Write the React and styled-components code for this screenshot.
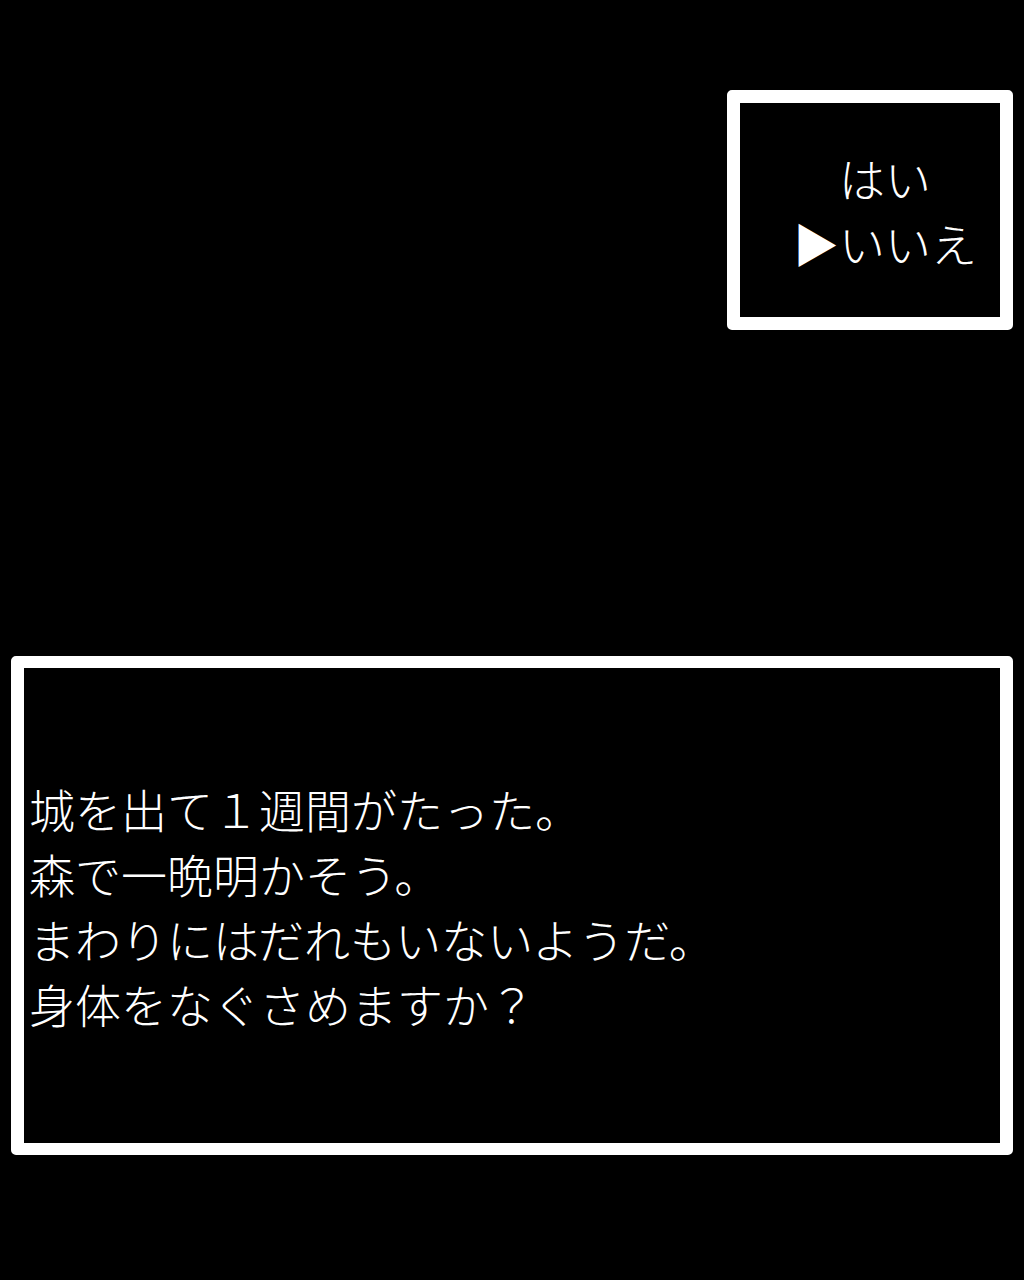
import styled, { createGlobalStyle } from 'styled-components';

const GlobalStyle = createGlobalStyle`
  html, body {
    margin: 0;
    padding: 0;
    background: #000;
  }
`;

const Screen = styled.div`
  width: 1024px;
  height: 1280px;
  box-sizing: border-box;
  padding: 90px 11px 0 11px;
  display: flex;
  flex-direction: column;
  background: #000;
  color: #fff;
  font-family: 'Noto Sans CJK JP', 'Noto Sans', sans-serif;
  font-size: 46px;
  font-weight: 300;
  line-height: 65px;
`;

const Window = styled.div`
  box-sizing: border-box;
  border: 13px solid #fff;
  border-radius: 5px;
  background: #000;
  display: flex;
  align-items: center;
`;

const ChoiceWindow = styled(Window)`
  align-self: flex-end;
  width: 286px;
  height: 240px;
  padding-left: 53px;
`;

const MessageWindow = styled(Window)`
  margin-top: 326px;
  height: 499px;
  border-width: 12px 13px 12px 13px;
  padding-left: 5px;
`;

const Lines = styled.div`
  display: flex;
  flex-direction: column;
`;

const Line = styled.div`
  white-space: pre;
`;

const Cursor = styled.span`
  display: inline-block;
  width: 46px;
`;

const choices = [
  { label: 'はい', selected: false },
  { label: 'いいえ', selected: true },
];

const message = [
  '城を出て１週間がたった。',
  '森で一晩明かそう。',
  'まわりにはだれもいないようだ。',
  '身体をなぐさめますか？',
];

export default function App() {
  return (
    <>
      <GlobalStyle />
      <Screen>
        <ChoiceWindow>
          <Lines>
            {choices.map((c) => (
              <Line key={c.label}>
                <Cursor>{c.selected ? '▶' : ''}</Cursor>
                {c.label}
              </Line>
            ))}
          </Lines>
        </ChoiceWindow>
        <MessageWindow>
          <Lines>
            {message.map((m) => (
              <Line key={m}>{m}</Line>
            ))}
          </Lines>
        </MessageWindow>
      </Screen>
    </>
  );
}
